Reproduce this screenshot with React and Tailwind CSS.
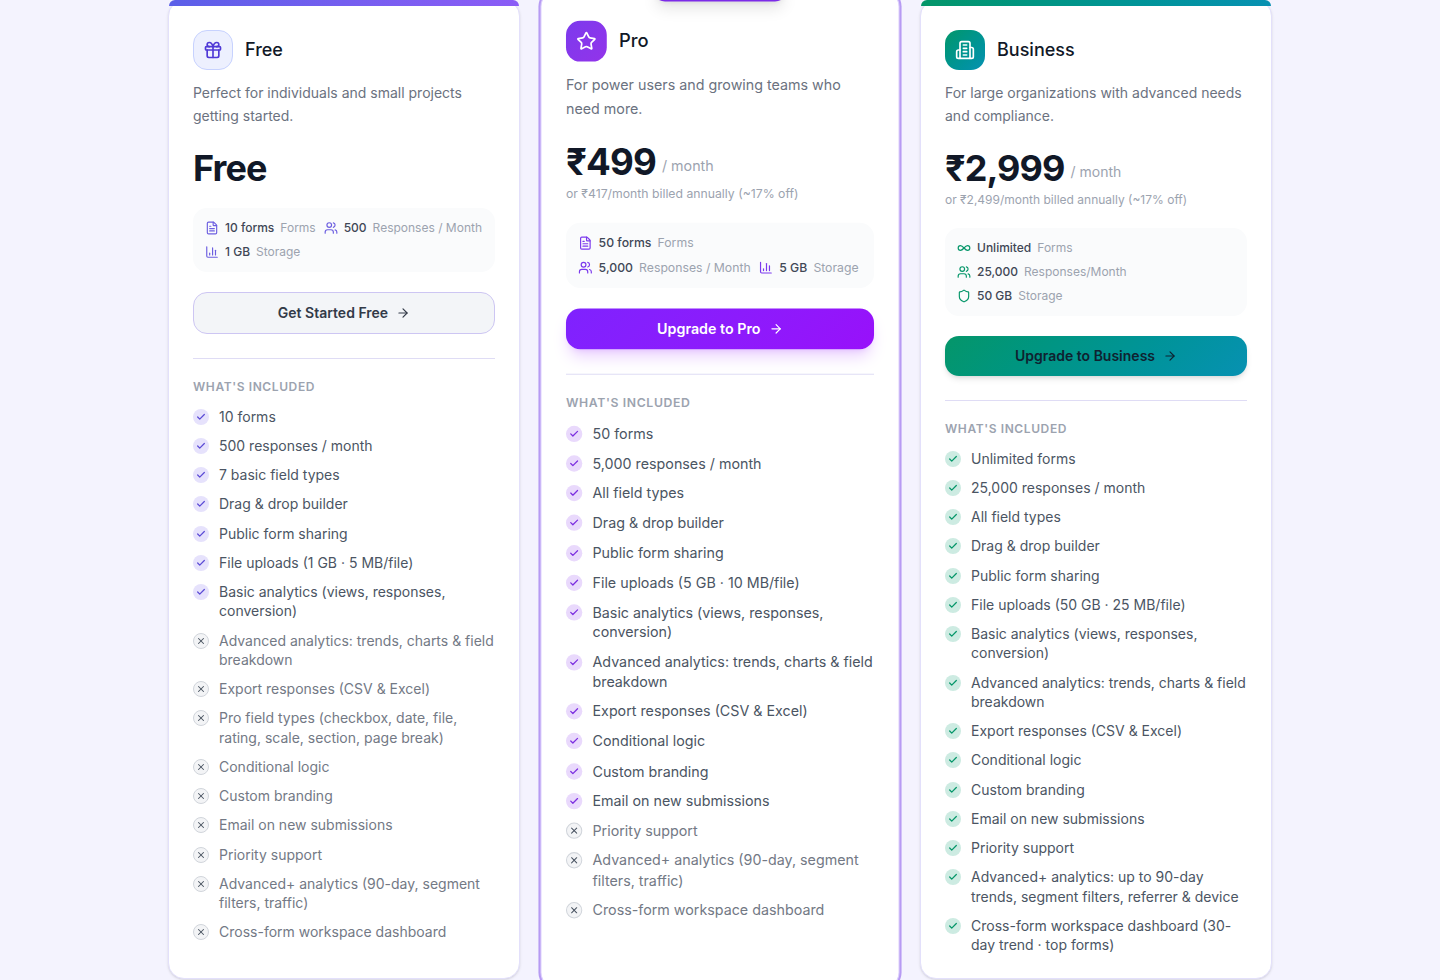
import { ArrowRight, ChartColumn, Check, FileText, Gift, Infinity as InfinityIcon, Shield, Star, Users, X } from "lucide-react";
import clsx from "clsx";

const BuildingIcon = ({ className }) => (
  <svg
    viewBox="0 0 24 24"
    fill="none"
    stroke="currentColor"
    strokeWidth="2"
    strokeLinecap="round"
    strokeLinejoin="round"
    className={className}
    aria-hidden="true"
  >
    <path d="M6 22V4a2 2 0 0 1 2-2h8a2 2 0 0 1 2 2v18Z" />
    <path d="M6 12H4a2 2 0 0 0-2 2v6a2 2 0 0 0 2 2h2" />
    <path d="M18 9h2a2 2 0 0 1 2 2v9a2 2 0 0 1-2 2h-2" />
    <path d="M10 6h4" />
    <path d="M10 10h4" />
    <path d="M10 14h4" />
    <path d="M10 18h4" />
  </svg>
);

const plans = [
  {
    id: "free",
    name: "Free",
    icon: Gift,
    description: "Perfect for individuals and small projects getting started.",
    price: "Free",
    stats: [
      { icon: FileText, value: "10 forms", label: "Forms" },
      { icon: Users, value: "500", label: "Responses / Month" },
      { icon: ChartColumn, value: "1 GB", label: "Storage" },
    ],
    cta: "Get Started Free",
    included: [
      "10 forms",
      "500 responses / month",
      "7 basic field types",
      "Drag & drop builder",
      "Public form sharing",
      "File uploads (1 GB · 5 MB/file)",
      "Basic analytics (views, responses, conversion)",
    ],
    excluded: [
      "Advanced analytics: trends, charts & field breakdown",
      "Export responses (CSV & Excel)",
      "Pro field types (checkbox, date, file, rating, scale, section, page break)",
      "Conditional logic",
      "Custom branding",
      "Email on new submissions",
      "Priority support",
      "Advanced+ analytics (90-day, segment filters, traffic)",
      "Cross-form workspace dashboard",
    ],
    styles: {
      card: "border-[#e3e0fb] shadow-sm",
      bar: "bg-linear-to-r from-[#5b5fe8] to-[#8b5cf6]",
      badge: "border border-[#c7d2fe] bg-[#edf0fe] text-[#4f39d6]",
      stat: "text-[#6d5fe0]",
      button: "border border-[#cdc6f3] bg-[#f3f5f8] text-[#323a48]",
      check: "bg-[#e6e2fc] text-[#5b4bd6]",
    },
  },
  {
    id: "pro",
    name: "Pro",
    icon: Star,
    popular: true,
    description: "For power users and growing teams who need more.",
    price: "₹499",
    yearly: "or ₹417/month billed annually (~17% off)",
    stats: [
      { icon: FileText, value: "50 forms", label: "Forms" },
      { icon: Users, value: "5,000", label: "Responses / Month" },
      { icon: ChartColumn, value: "5 GB", label: "Storage" },
    ],
    cta: "Upgrade to Pro",
    included: [
      "50 forms",
      "5,000 responses / month",
      "All field types",
      "Drag & drop builder",
      "Public form sharing",
      "File uploads (5 GB · 10 MB/file)",
      "Basic analytics (views, responses, conversion)",
      "Advanced analytics: trends, charts & field breakdown",
      "Export responses (CSV & Excel)",
      "Conditional logic",
      "Custom branding",
      "Email on new submissions",
    ],
    excluded: [
      "Priority support",
      "Advanced+ analytics (90-day, segment filters, traffic)",
      "Cross-form workspace dashboard",
    ],
    styles: {
      card: "scale-[1.02] border-[#ddd0fc] ring-2 ring-[#b79bf3]",
      badge: "bg-linear-135 from-[#7c3aed] to-[#9333ea] text-white",
      stat: "text-[#7c3aed]",
      button: "bg-linear-135 from-[#7f22fe] to-[#9810fa] text-white shadow-lg shadow-purple-500/25",
      check: "bg-[#e9d9fc] text-[#7c2fe0]",
    },
  },
  {
    id: "business",
    name: "Business",
    icon: BuildingIcon,
    description: "For large organizations with advanced needs and compliance.",
    price: "₹2,999",
    yearly: "or ₹2,499/month billed annually (~17% off)",
    stats: [
      { icon: InfinityIcon, value: "Unlimited", label: "Forms" },
      { icon: Users, value: "25,000", label: "Responses/Month" },
      { icon: Shield, value: "50 GB", label: "Storage" },
    ],
    cta: "Upgrade to Business",
    included: [
      "Unlimited forms",
      "25,000 responses / month",
      "All field types",
      "Drag & drop builder",
      "Public form sharing",
      "File uploads (50 GB · 25 MB/file)",
      "Basic analytics (views, responses, conversion)",
      "Advanced analytics: trends, charts & field breakdown",
      "Export responses (CSV & Excel)",
      "Conditional logic",
      "Custom branding",
      "Email on new submissions",
      "Priority support",
      "Advanced+ analytics: up to 90-day trends, segment filters, referrer & device",
      "Cross-form workspace dashboard (30-day trend · top forms)",
    ],
    excluded: [],
    styles: {
      card: "border-[#e3e0fb] shadow-sm",
      bar: "bg-linear-to-r from-[#059669] to-[#0891b2]",
      badge: "bg-linear-135 from-[#059669] to-[#0891b2] text-white",
      stat: "text-[#059669]",
      button: "bg-linear-135 from-[#059669] to-[#0891b2] text-[#0f2230] shadow-md",
      check: "bg-[#cdebe2] text-[#059669]",
    },
  },
];

const Stat = ({ icon: Icon, value, label, color }) => (
  <div className="flex items-center gap-1.5 whitespace-nowrap text-xs">
    <Icon className={clsx("size-3.5 shrink-0", color)} />
    <span className="font-medium text-[#3f4756]">{value}</span>
    <span className="text-[#9ca3af]">{label}</span>
  </div>
);

const Feature = ({ text, included, check }) => (
  <li className="flex items-start gap-2.5 text-sm leading-snug">
    <span
      className={clsx(
        "mt-0.5 flex size-4 shrink-0 items-center justify-center rounded-full",
        included ? check : "border border-[#d1d5db] bg-[#f3f4f6] text-[#4b5563]"
      )}
    >
      {included ? <Check className="size-2.5" strokeWidth={3} /> : <X className="size-2.5" strokeWidth={2.5} />}
    </span>
    <span className={included ? "text-[#4b5563]" : "text-[#737985]"}>{text}</span>
  </li>
);

const PlanCard = ({ plan }) => {
  const Icon = plan.icon;
  const { styles } = plan;

  return (
    <article className={clsx("relative rounded-2xl border bg-white px-6 pt-[29px] pb-6", styles.card)}>
      {plan.popular ? (
        <div className="absolute inset-x-0 -top-3.5 mx-auto h-6 w-[132px] rounded-full bg-[#7c2be8] shadow-lg" />
      ) : (
        <div className={clsx("absolute inset-x-0 -top-px h-1.5 rounded-t-2xl", styles.bar)} />
      )}

      <div className="mb-3 flex items-center gap-3">
        <span className={clsx("flex size-10 items-center justify-center rounded-[14px]", styles.badge)}>
          <Icon className="size-5" />
        </span>
        <h3 className="text-lg leading-tight font-medium text-[#111827]">{plan.name}</h3>
      </div>
      <p className="mb-5 text-sm leading-relaxed text-[#6b7280]">{plan.description}</p>

      <div className="mb-5">
        <div className="flex items-end gap-1.5">
          <span className="text-4xl font-bold tracking-tight text-[#111827]">{plan.price}</span>
          {plan.yearly && <span className="mb-1.5 text-sm text-[#9ca3af]">/ month</span>}
        </div>
        {plan.yearly && <p className="mt-1 text-xs text-[#9ca3af]">{plan.yearly}</p>}
      </div>

      <div className="mb-5 flex flex-wrap gap-2 rounded-[14px] bg-[#fafbfc] p-3">
        {plan.stats.map((stat) => (
          <Stat key={stat.label} {...stat} color={styles.stat} />
        ))}
      </div>

      <button
        type="button"
        className={clsx(
          "flex w-full items-center justify-center gap-2 rounded-[14px] px-4 py-2.5 text-sm font-semibold",
          styles.button
        )}
      >
        {plan.cta}
        <ArrowRight className="size-3.5" />
      </button>

      <div className="mt-6 border-t border-[#dfdcf5] pt-5">
        <p className="mb-3 text-xs font-semibold tracking-wider text-[#9ca3af] uppercase">What's included</p>
        <ul className="flex flex-col gap-2.5">
          {plan.included.map((text) => (
            <Feature key={text} text={text} included check={styles.check} />
          ))}
          {plan.excluded.map((text) => (
            <Feature key={text} text={text} />
          ))}
        </ul>
      </div>
    </article>
  );
};

const App = () => {
  return (
    <main className="h-screen overflow-hidden bg-[#f4f3fe] font-['Inter',sans-serif]">
      <section className="mx-auto grid max-w-6xl grid-cols-3 gap-6 px-6">
        {plans.map((plan) => (
          <PlanCard key={plan.id} plan={plan} />
        ))}
      </section>
    </main>
  );
};

export default App;
